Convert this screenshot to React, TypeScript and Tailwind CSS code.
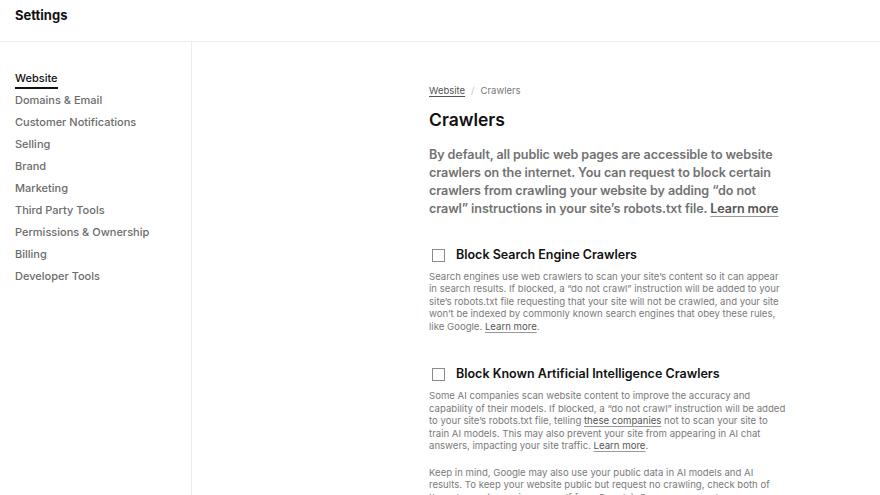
import React from "react";

const navItems = [
  "Website",
  "Domains & Email",
  "Customer Notifications",
  "Selling",
  "Brand",
  "Marketing",
  "Third Party Tools",
  "Permissions & Ownership",
  "Billing",
  "Developer Tools",
];

function Checkbox() {
  return <span className="block w-[13px] h-[13px] border border-[#8a8a8a] bg-white shrink-0" />;
}

function Lines({ lines }: { lines: React.ReactNode[] }) {
  return (
    <>
      {lines.map((l, i) => (
        <React.Fragment key={i}>
          {l}
          {i < lines.length - 1 && <br />}
        </React.Fragment>
      ))}
    </>
  );
}

const smallLink = "text-[#555] underline underline-offset-2 decoration-[#999]";

export default function App() {
  return (
    <div className="w-[880px] h-[495px] overflow-hidden bg-white text-[#1a1a1a] flex flex-col" style={{ fontFamily: "Inter, 'Liberation Sans', sans-serif" }}>
      <header className="h-[42px] shrink-0 border-b border-[#ececec] flex items-center px-[15px]">
        <h1 className="text-[13px] font-bold text-[#111] -mt-[10px]">Settings</h1>
      </header>
      <div className="flex flex-1 min-h-0">
        <nav className="w-[192px] shrink-0 border-r border-[#ececec] pt-[25px] pl-[15px] flex flex-col">
          {navItems.map((item, i) => (
            <div key={item} className="h-[22px] flex items-center">
              <span
                className={
                  i === 0
                    ? "text-[11px] font-medium text-[#111] border-b-2 border-[#111] leading-[15px] mt-[4px] pb-[1px]"
                    : "text-[11px] font-medium text-[#6c6c6c] leading-[15px]"
                }
              >
                {item}
              </span>
            </div>
          ))}
        </nav>
        <main className="flex-1 pl-[237px] pt-[43px]">
          <div className="w-[360px] whitespace-nowrap">
            <div className="flex items-center gap-[6px] text-[9.5px] leading-[12px]">
              <span className="text-[#555] underline underline-offset-2">Website</span>
              <span className="text-[#c8c8c8]">/</span>
              <span className="text-[#777]">Crawlers</span>
            </div>
            <h2 className="text-[17.5px] font-semibold text-[#111] mt-[11px] leading-[24px]">Crawlers</h2>
            <p className="mt-[14px] text-[12.6px] font-semibold text-[#727272] leading-[18px] tracking-[-0.1px]">
              <Lines
                lines={[
                  "By default, all public web pages are accessible to website",
                  "crawlers on the internet. You can request to block certain",
                  "crawlers from crawling your website by adding “do not",
                  <>
                    crawl” instructions in your site’s robots.txt file.{" "}
                    <span className="text-[#555] underline underline-offset-[3px] decoration-[#999]">Learn more</span>
                  </>,
                ]}
              />
            </p>

            <div className="mt-[28px] flex items-center gap-[11px] pl-[3px]">
              <Checkbox />
              <span className="text-[12.5px] font-semibold text-[#111]">Block Search Engine Crawlers</span>
            </div>
            <p className="mt-[6px] text-[9.6px] text-[#7a7a7a] leading-[12.5px]">
              <Lines
                lines={[
                  "Search engines use web crawlers to scan your site’s content so it can appear",
                  "in search results. If blocked, a “do not crawl” instruction will be added to your",
                  "site’s robots.txt file requesting that your site will not be crawled, and your site",
                  "won’t be indexed by commonly known search engines that obey these rules,",
                  <>
                    like Google. <span className={smallLink}>Learn more</span>.
                  </>,
                ]}
              />
            </p>

            <div className="mt-[32px] flex items-center gap-[11px] pl-[3px]">
              <Checkbox />
              <span className="text-[12.5px] font-semibold text-[#111]">Block Known Artificial Intelligence Crawlers</span>
            </div>
            <p className="mt-[6px] text-[9.6px] text-[#7a7a7a] leading-[12.5px]">
              <Lines
                lines={[
                  "Some AI companies scan website content to improve the accuracy and",
                  "capability of their models. If blocked, a “do not crawl” instruction will be added",
                  <>
                    to your site’s robots.txt file, telling <span className={smallLink}>these companies</span> not to scan your site to
                  </>,
                  "train AI models. This may also prevent your site from appearing in AI chat",
                  <>
                    answers, impacting your site traffic. <span className={smallLink}>Learn more</span>.
                  </>,
                ]}
              />
            </p>
            <p className="mt-[14px] text-[9.6px] text-[#7a7a7a] leading-[12.5px]">
              <Lines
                lines={[
                  "Keep in mind, Google may also use your public data in AI models and AI",
                  "results. To keep your website public but request no crawling, check both of",
                  "these boxes (removing yourself from Google). Squarespace makes no",
                ]}
              />
            </p>
          </div>
        </main>
      </div>
    </div>
  );
}
